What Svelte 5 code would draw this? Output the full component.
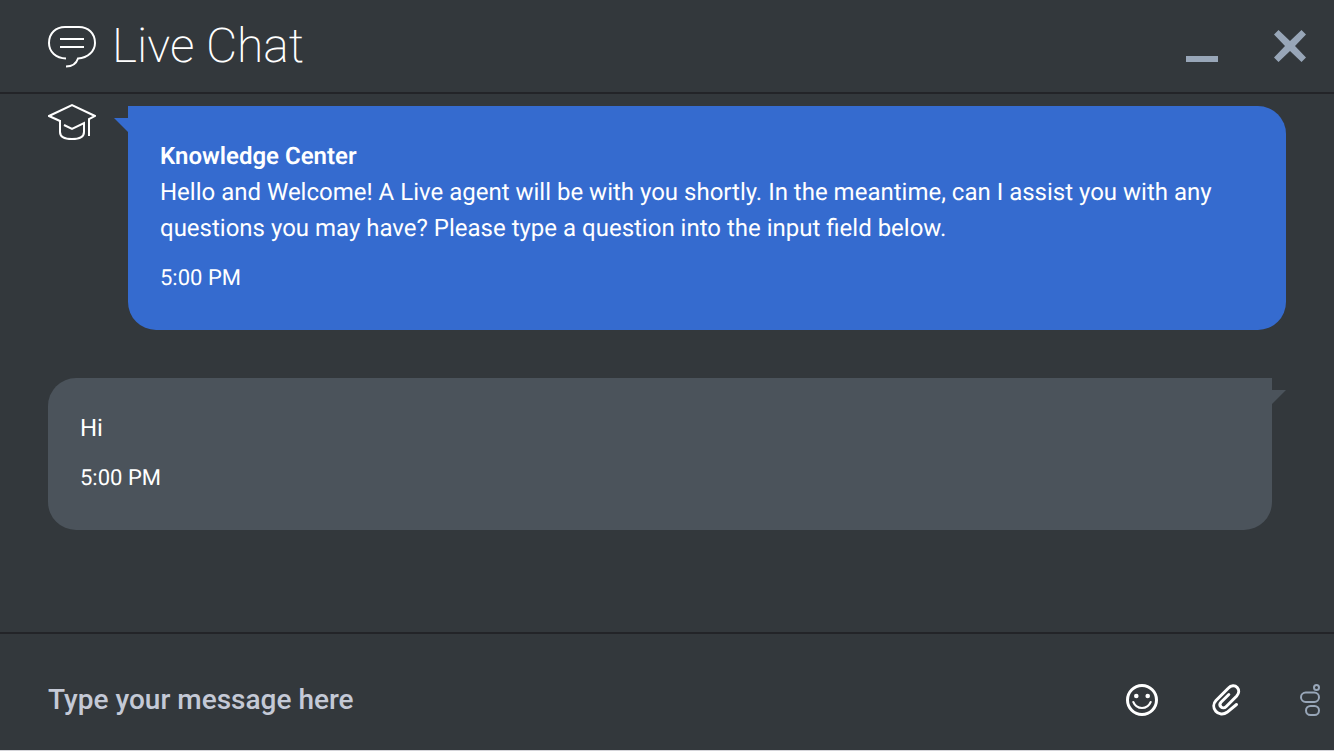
<script lang="ts">

  interface Message {
    author: string
    text: string
    time: string
    fromAgent: boolean
  }

  let draft = $state('')

  let messages: Message[] = $state([
    {
      author: 'Knowledge Center',
      text: 'Hello and Welcome! A Live agent will be with you shortly. In the meantime, can I assist you with any questions you may have? Please type a question into the input field below.',
      time: '5:00 PM',
      fromAgent: true
    },
    { author: '', text: 'Hi', time: '5:00 PM', fromAgent: false }
  ])

  function send(event: SubmitEvent) {
    event.preventDefault()
    if (!draft.trim()) return
    const time = new Date().toLocaleTimeString('en-US', { hour: 'numeric', minute: '2-digit' })
    messages.push({ author: '', text: draft, time, fromAgent: false })
    draft = ''
  }

</script>

<div class="chat">
  <header class="header">
    <svg class="logo" viewBox="0 0 48 48" aria-hidden="true">
      <path d="M18 36.500 C8 36 1 30 1 21 C1 11 8 5 17 5 H31 C40 5 47 11 47 21 C47 29 40 36 30 36.500 C28.500 41 25 44.500 18 44.500" />
      <path d="M12 17 H36 M12 25 H36" />
    </svg>
    <h1 class="title">Live Chat</h1>
    <button class="window-button" type="button" aria-label="Minimize">
      <svg viewBox="0 0 32 32"><path d="M0 26 H32 V32 H0 Z" /></svg>
    </button>
    <button class="window-button" type="button" aria-label="Close">
      <svg viewBox="0 0 32 32"><path d="M4.500 0 L16 11 L27.500 0 L32 4.500 L21 16 L32 27.500 L27.500 32 L16 21 L4.500 32 L0 27.500 L11 16 L0 4.500 Z" /></svg>
    </button>
  </header>

  <main class="messages">
    {#each messages as message}
      <div class="row" class:agent={message.fromAgent}>
        {#if message.fromAgent}
          <svg class="avatar" viewBox="0 0 48 40" aria-hidden="true">
            <path d="M12 19 L1 14 L24 3 L47 14 L41 17 V34" />
            <path d="M12 18 V30 C12 35 17 37 24 37 C31 37 36 35 36 30 V21 L24 27 L16 23" />
          </svg>
        {/if}
        <div class="bubble">
          {#if message.author}
            <strong class="author">{message.author}</strong>
          {/if}
          <p class="text">{message.text}</p>
          <time class="time">{message.time}</time>
        </div>
      </div>
    {/each}
  </main>

  <form class="composer" onsubmit={send}>
    <input class="input" type="text" aria-label="Message" placeholder="Type your message here" bind:value={draft} />
    <button class="tool" type="button" aria-label="Add emoji">
      <svg viewBox="0 0 32 32">
        <circle class="line" cx="16" cy="16" r="14.5" />
        <circle cx="10.3" cy="12" r="2.3" />
        <circle cx="21.7" cy="12" r="2.3" />
        <path class="line thin" d="M7.3 18 C9 22 12 24 16 24 C20 24 23 22 24.7 18" />
      </svg>
    </button>
    <button class="tool" type="button" aria-label="Attach file">
      <svg viewBox="0 0 32 32">
        <path class="line" d="M26.5 20.5 L17 28.3 C13.5 31 8.5 30.5 5.8 27.3 C3 24 3.2 19.5 6 16.5 L18.5 4 C21 1.2 25 1 27.2 3.500 C29.5 6 29 9.5 26.7 12 L16 22.7 C14.5 24.2 12.3 24.2 11 22.9 C9.7 21.6 9.7 19.6 11 18.2 L18.8 10.5" />
      </svg>
    </button>
    <button class="tool brand" type="button" aria-label="More options">
      <svg viewBox="0 0 32 32">
        <circle cx="22.500" cy="3.500" r="2.500" />
        <rect x="7" y="8.500" width="18" height="9.500" rx="4.750" />
        <rect x="12" y="22" width="13" height="9" rx="4.500" />
      </svg>
    </button>
  </form>
</div>

<style>
:global(body) {
  margin: 0;
  background: #ffffff;
}
.chat {
  box-sizing: border-box;
  display: flex;
  flex-direction: column;
  min-height: calc(100vh - 1px);
  border-bottom: 1px solid #d5d5da;
  background: #33383c;
  color: #ffffff;
  font-family: Roboto, "Liberation Sans", sans-serif;
  text-rendering: geometricPrecision;
}
button {
  padding: 0;
  border: 0;
  background: none;
  cursor: pointer;
}
svg {
  display: block;
}

.header {
  display: flex;
  align-items: center;
  height: 92px;
  padding: 0 28px 0 48px;
  border-bottom: 2px solid #232428;
}
.logo {
  width: 48px;
  height: 48px;
  fill: none;
  stroke: #ffffff;
  stroke-width: 2;
}
.title {
  flex: 1;
  margin: 0 0 0 16px;
  font-size: 48px;
  font-weight: 200;
  line-height: 60px;
}
.window-button svg {
  width: 32px;
  height: 32px;
  fill: #98a6b8;
}
.window-button + .window-button {
  margin-left: 56px;
}

.messages {
  flex: 1;
  display: flex;
  flex-direction: column;
  gap: 48px;
  padding: 12px 48px;
}
.row {
  display: flex;
  align-items: flex-start;
  padding-right: 14px;
}
.row.agent {
  gap: 32px;
  padding-right: 0;
}
.avatar {
  flex: none;
  width: 48px;
  height: 40px;
  margin-top: -4px;
  fill: none;
  stroke: #ffffff;
  stroke-width: 2;
}
.bubble {
  position: relative;
  flex: 1;
  padding: 32px;
  border-radius: 28px 0 28px 28px;
  background: #4b535b;
  font-size: 24px;
  line-height: 36px;
}
.agent .bubble {
  border-radius: 0 28px 28px 28px;
  background: #356bcf;
}
/* little tail on the side of the speaker */
.bubble::after {
  content: '';
  position: absolute;
  top: 12px;
  left: 100%;
  border-top: 14px solid #4b535b;
  border-right: 14px solid transparent;
}
.agent .bubble::after {
  right: 100%;
  left: auto;
  border-top-color: #356bcf;
  border-right: 0;
  border-left: 14px solid transparent;
}
.author {
  display: block;
  font-weight: 600;
}
.text {
  margin: 0;
}
.time {
  display: block;
  margin: 16px 0 2px;
  font-size: 22px;
  line-height: 34px;
}

.composer {
  display: flex;
  align-items: center;
  height: 118px;
  padding: 16px 8px 0 48px;
  box-sizing: border-box;
  border-top: 2px solid #232428;
}
.input {
  flex: 1;
  min-width: 0;
  padding: 0;
  border: 0;
  outline: 0;
  background: none;
  color: #ffffff;
  font: 500 28px/40px Roboto, "Liberation Sans", sans-serif;
}
.input::placeholder {
  color: #c4c9d6;
  opacity: 1;
}
.tool svg {
  width: 32px;
  height: 32px;
  fill: #ffffff;
}
.tool + .tool {
  margin-left: 52px;
}
.tool .line {
  fill: none;
  stroke: #ffffff;
  stroke-width: 3;
  stroke-linecap: round;
}
.tool .thin {
  stroke-width: 2;
}
.tool.brand svg {
  fill: none;
  stroke: #98a6b8;
  stroke-width: 2;
}
</style>
